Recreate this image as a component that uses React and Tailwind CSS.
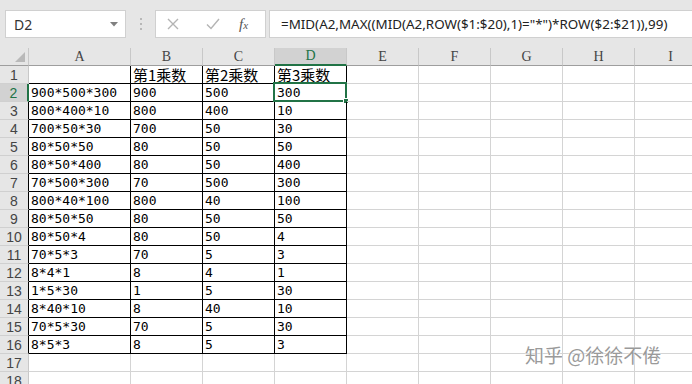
import React from 'react';

const cols = ['A', 'B', 'C', 'D', 'E', 'F', 'G', 'H', 'I'];

// sheet contents, columns A-D
const data = [
  ['', '第1乘数', '第2乘数', '第3乘数'],
  ['900*500*300', '900', '500', '300'],
  ['800*400*10', '800', '400', '10'],
  ['700*50*30', '700', '50', '30'],
  ['80*50*50', '80', '50', '50'],
  ['80*50*400', '80', '50', '400'],
  ['70*500*300', '70', '500', '300'],
  ['800*40*100', '800', '40', '100'],
  ['80*50*50', '80', '50', '50'],
  ['80*50*4', '80', '50', '4'],
  ['70*5*3', '70', '5', '3'],
  ['8*4*1', '8', '4', '1'],
  ['1*5*30', '1', '5', '30'],
  ['8*40*10', '8', '40', '10'],
  ['70*5*30', '70', '5', '30'],
  ['8*5*3', '8', '5', '3'],
  ['', '', '', ''],
  ['', '', '', ''],
];

function TopBar() {
  return (
    <div className="h-[48px] bg-[#e6e6e6] flex items-start pt-[10px] font-['Noto_Sans','Noto_Sans_CJK_SC',sans-serif]">
      {/* name box */}
      <div className="ml-[5px] w-[121px] h-[28px] bg-white border border-[#d0d0d0] flex items-center justify-between pl-[8px] pr-[7px]">
        <span className="text-[14px] text-[#333]">D2</span>
        <svg width="8" height="5" viewBox="0 0 8 5">
          <path d="M0 0 L8 0 L4 4.5 Z" fill="#808080" />
        </svg>
      </div>
      <div className="w-[29px] h-[28px] flex flex-col items-center justify-center gap-[3px]">
        <span className="w-[2px] h-[2px] bg-[#b8b8b8]" />
        <span className="w-[2px] h-[2px] bg-[#b8b8b8]" />
        <span className="w-[2px] h-[2px] bg-[#b8b8b8]" />
      </div>
      {/* cancel / enter / fx */}
      <div className="w-[111px] h-[28px] bg-white border border-[#d0d0d0] flex items-center">
        <svg className="ml-[11px]" width="12" height="12" viewBox="0 0 12 12">
          <path d="M1 1 L11 11 M11 1 L1 11" stroke="#b4b4b4" strokeWidth="1.4" />
        </svg>
        <svg className="ml-[27px]" width="14" height="12" viewBox="0 0 14 12">
          <path d="M1 6.5 L5 10.5 L13 1" stroke="#b4b4b4" strokeWidth="1.4" fill="none" />
        </svg>
        <span className="ml-[19px] font-['Liberation_Serif',serif] italic text-[#555] text-[15px] leading-none">
          f<span className="text-[11px]">x</span>
        </span>
      </div>
      <div className="ml-[3px] flex-1 h-[28px] bg-white border-y border-l border-[#d0d0d0] flex items-center pl-[11px]">
        <span className="text-[13.4px] text-[#222] whitespace-nowrap">
          =MID(A2,MAX((MID(A2,ROW($1:$20),1)="*")*ROW($2:$21)),99)
        </span>
      </div>
    </div>
  );
}

function HeaderRow() {
  return (
    <div className="flex h-[18px] bg-[#e6e6e6] font-['Liberation_Serif',serif] text-[14px] text-[#444]">
      <div className="w-[29px] shrink-0 border-r border-b border-r-[#c8c8c8] border-b-[#9e9e9e] relative">
        <svg className="absolute right-[3px] bottom-[3px]" width="10" height="10" viewBox="0 0 10 10">
          <path d="M10 0 L10 10 L0 10 Z" fill="#b9b9b9" />
        </svg>
      </div>
      {cols.map((c, i) => {
        const w = i === 0 ? 'w-[102px]' : 'w-[72px]';
        if (c === 'D') {
          return (
            <div key={c} className={`${w} shrink-0 bg-[#d2d2d2] border-r border-r-[#c8c8c8] border-b-2 border-b-[#217346] flex items-center justify-center leading-none text-[#217346]`}>
              {c}
            </div>
          );
        }
        return (
          <div key={c} className={`${w} shrink-0 border-r border-b border-r-[#c8c8c8] border-b-[#9e9e9e] flex items-center justify-center leading-none`}>
            {c}
          </div>
        );
      })}
    </div>
  );
}

function Row({ n, vals }) {
  const inTable = n <= 16;
  const rowHeadCls =
    n === 2
      ? 'bg-[#d2d2d2] border-r-2 border-r-[#217346] text-[#217346]'
      : inTable && n > 1
      ? 'bg-[#e6e6e6] border-r border-r-black text-[#444]'
      : 'bg-[#e6e6e6] border-r border-r-[#c8c8c8] text-[#444]';
  return (
    <div className="flex h-[18px]">
      <div className={`w-[29px] shrink-0 border-b border-b-[#d0d0d0] flex items-center justify-center font-['Liberation_Sans',sans-serif] text-[14px] leading-none ${rowHeadCls}`}>
        {n}
      </div>
      {cols.map((c, i) => {
        const w = i === 0 ? 'w-[102px]' : 'w-[72px]';
        const v = i < 4 ? vals[i] : '';
        const borders = inTable && i < 4 ? 'border-black' : 'border-[#d4d4d4]';
        const font =
          n === 1
            ? "font-['Noto_Sans_CJK_SC',sans-serif] text-[15px]"
            : "font-['DejaVu_Sans_Mono','Noto_Sans_CJK_SC',monospace] text-[13px]";
        const active = n === 2 && c === 'D';
        return (
          <div key={c} className={`${w} shrink-0 border-r border-b ${borders} ${font} leading-[17px] pl-[2px] text-black whitespace-nowrap relative`}>
            {v}
            {active && (
              <>
                <div className="absolute -left-[2px] -top-[2px] w-[74px] h-[20px] border-2 border-[#217346]" />
                <div className="absolute -right-[3px] -bottom-[3px] w-[6px] h-[6px] bg-[#217346] border border-white" />
              </>
            )}
          </div>
        );
      })}
    </div>
  );
}

export default function App() {
  return (
    <div className="w-[692px] h-[384px] overflow-hidden bg-white relative">
      <TopBar />
      <HeaderRow />
      {data.map((vals, idx) => (
        <Row key={idx} n={idx + 1} vals={vals} />
      ))}
      <div className="absolute left-[525px] top-[345px] font-['Noto_Sans_CJK_SC',sans-serif] text-[19px] leading-none text-[#9a9a9a] [text-shadow:0_0_2px_#fff,0_0_1px_#fff] whitespace-nowrap">
        知乎 @徐徐不倦
      </div>
    </div>
  );
}
